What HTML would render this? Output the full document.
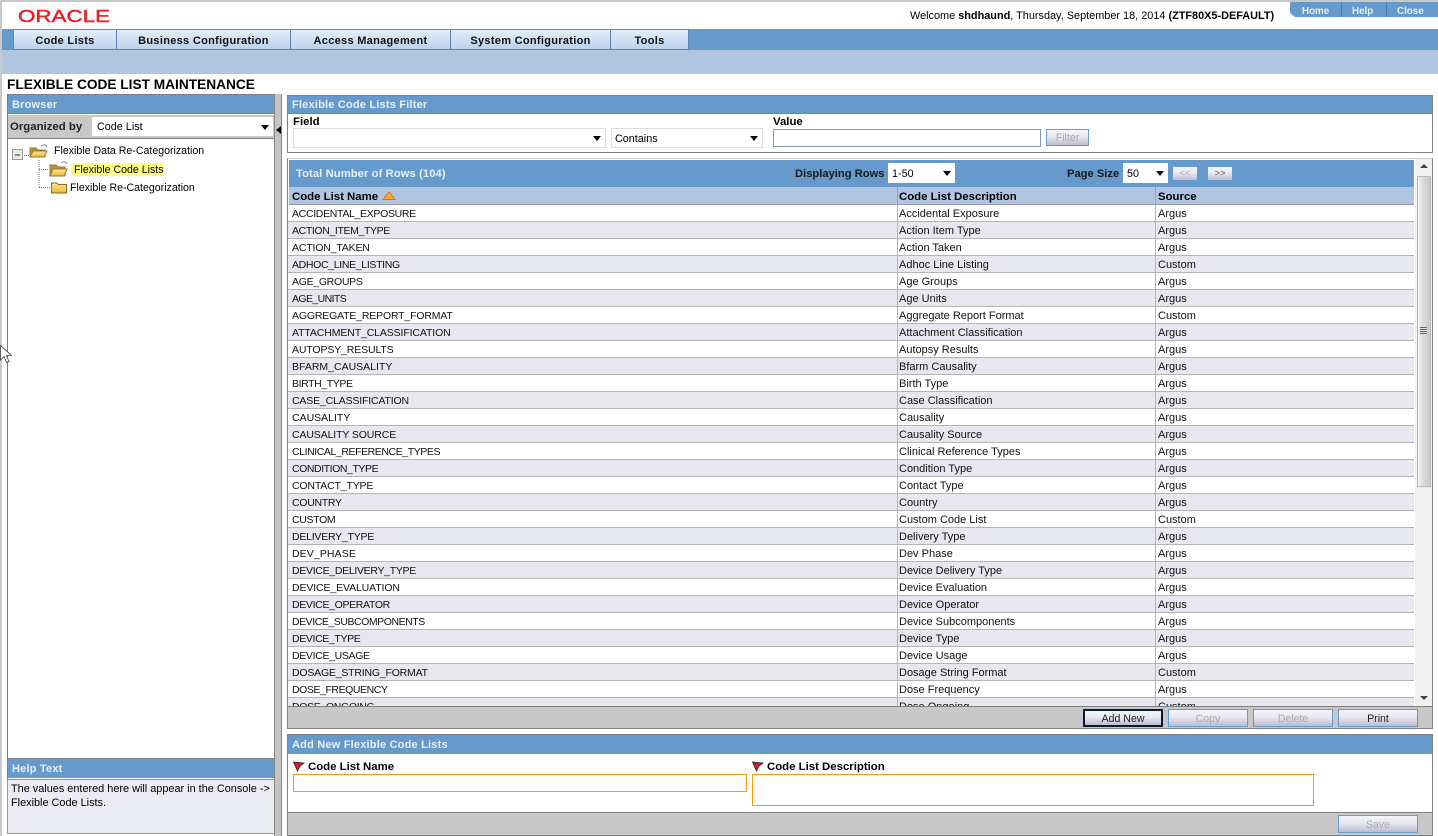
<!DOCTYPE html>
<html><head><meta charset="utf-8"><title>Flexible Code List Maintenance</title>
<style>
html,body{margin:0;padding:0;background:#fff}
body{width:1438px;height:836px;overflow:hidden;position:relative;font-family:"Liberation Sans",Arial,sans-serif;font-size:10.6px;color:#000}
.a{position:absolute;box-sizing:border-box}
.t{position:absolute;white-space:nowrap;line-height:14px}
.b{font-weight:bold}
.ph{position:absolute;box-sizing:border-box;background:#6699cc;color:#e8f0f8;font-weight:bold;font-size:11px;padding-left:4px;letter-spacing:.2px}
.tab{position:absolute;top:29px;height:21px;box-sizing:border-box;border:1px solid #5f86b3;background:linear-gradient(#e4eefa,#b9d2ec);font-weight:bold;font-size:11px;line-height:21px;padding-top:1px;text-align:center;color:#111;letter-spacing:.3px}
.sel{position:absolute;box-sizing:border-box;background:#fff;border:1px solid #ddd;line-height:20px;padding-left:3px;font-size:10.8px}
.sel:after{content:"";position:absolute;right:4px;top:50%;margin-top:-2px;border:4px solid transparent;border-top:5px solid #000;border-bottom:0}
.btn{position:absolute;box-sizing:border-box;width:80px;height:18px;border:1px solid #6699cc;background:linear-gradient(#f4f4fa 0,#e8e8f2 45%,#bcbcd0 100%);text-align:center;font-size:10.6px;line-height:18px;color:#222}
.dis{color:#aaa}
#rows{position:absolute;left:288px;top:205px;width:1126px;height:501px;overflow:hidden}
.r{height:17px;box-sizing:border-box;border-bottom:1px solid #b4b4b4;position:relative;background:#fff;white-space:nowrap}
.r:nth-child(even){background:#e7e7f1}
.r span{position:absolute;top:0;height:17px;box-sizing:border-box;color:#111;line-height:19px;font-size:11px}
.r span:nth-child(1){left:4px;font-size:10.5px}
.r span:nth-child(2){left:609px;width:258px;border-left:1px solid #b4b4b4;padding-left:1px}
.r span:nth-child(3){left:867px;width:259px;border-left:1px solid #b4b4b4;padding-left:2px}
</style></head><body>
<div class="a" style="left:0;top:0;width:1438px;height:2px;background:#c8c8c8"></div>
<div class="a" style="left:0;top:0;width:2px;height:836px;background:#c8c8c8"></div>

<svg class="a" style="left:16px;top:6px" width="98" height="20"><text x="2" y="16" font-family="Liberation Sans" font-size="17.5" fill="#f01c24" stroke="#f01c24" stroke-width=".45" textLength="92" lengthAdjust="spacingAndGlyphs">ORACLE</text></svg>

<div class="t" style="left:910px;top:9px;font-size:10.9px">Welcome <b>shdhaund</b>, Thursday, September 18, 2014 <b>(ZTF80X5-DEFAULT)</b></div>
<div class="a" style="left:1290px;top:2px;width:148px;height:15px;background:#6699cc;clip-path:polygon(0 0,100% 0,100% 100%,5px 100%,0 11px)"></div>
<div class="a" style="left:1341px;top:2px;width:1px;height:15px;background:#4f7cab"></div>
<div class="a" style="left:1386px;top:2px;width:1px;height:15px;background:#4f7cab"></div>
<div class="t b" style="left:1302px;top:5px;color:#e8f0f8;font-size:9.8px">Home</div>
<div class="t b" style="left:1352px;top:5px;color:#e8f0f8;font-size:9.8px">Help</div>
<div class="t b" style="left:1397px;top:5px;color:#e8f0f8;font-size:9.8px">Close</div>

<div class="a" style="left:2px;top:29px;width:1436px;height:21px;background:#6699cc"></div>
<div class="a" style="left:2px;top:50px;width:1436px;height:24px;background:#b1c5e1"></div>
<div class="tab" style="left:13px;width:104px">Code Lists</div>
<div class="tab" style="left:116px;width:175px">Business Configuration</div>
<div class="tab" style="left:290px;width:161px">Access Management</div>
<div class="tab" style="left:450px;width:161px">System Configuration</div>
<div class="tab" style="left:610px;width:79px">Tools</div>

<div class="t b" style="left:7px;top:78px;font-size:13.7px;color:#000">FLEXIBLE CODE LIST MAINTENANCE</div>

<!-- left panel -->
<div class="a" style="left:7px;top:94px;width:268px;height:740px;border:1px solid #808080;background:#fff"></div>
<div class="ph" style="left:8px;top:95px;width:266px;height:19px;border-bottom:1px solid #808080;line-height:20px">Browser</div>
<div class="a" style="left:8px;top:115px;width:266px;height:24px;background:#c8c8c8;border-bottom:1px solid #808080"></div>
<div class="t b" style="left:10px;top:120px;font-size:11.4px;color:#222">Organized by</div>
<div class="sel" style="left:92px;top:117px;width:181px;height:19px;border:0;line-height:20px;padding-left:5px">Code List</div>

<svg class="a" style="left:10px;top:140px" width="190" height="60" fill="none">
<defs><linearGradient id="g" x1="0" y1="0" x2="0" y2="1"><stop offset="0" stop-color="#fbe89a"/><stop offset="1" stop-color="#e8b830"/></linearGradient></defs>
<rect x="2.500" y="9.500" width="10" height="10" fill="#e8e8e8" stroke="#999"/><path d="M5 15h5" stroke="#333"/>
<path d="M14 15.500h6M29 20v28M29 29.500h10M29 47.500h11" stroke="#777" stroke-dasharray="1 1"/>
<path d="M20 17V8h6l2 2h7v7z" fill="#b89440" stroke="#9a7a30"/><path d="M20 17l3-6h14l-3 6z" fill="url(#g)" stroke="#9a7a30"/><path d="M31 6q4-3 6 1" stroke="#6a8fb8"/>
<path d="M40 36V25h6l2 2h7v9z" fill="#b89440" stroke="#9a7a30"/><path d="M40 36l3-7h14l-3 7z" fill="url(#g)" stroke="#9a7a30"/><path d="M51 23q4-3 6 1" stroke="#6a8fb8"/>
<path d="M41.500 53V43h5l2 1.500h8V53z" fill="url(#g)" stroke="#8a6a20"/>
</svg>
<div class="t" style="left:54px;top:144px">Flexible Data Re-Categorization</div>
<div class="a" style="left:71px;top:163px;width:93px;height:13px;background:#ffff80"></div>
<div class="t" style="left:74px;top:163px">Flexible Code Lists</div>
<div class="t" style="left:70px;top:181px">Flexible Re-Categorization</div>

<div class="ph" style="left:8px;top:758px;width:266px;height:20px;border-top:1px solid #808080;line-height:20px">Help Text</div>
<div class="a" style="left:7px;top:779px;width:268px;height:55px;background:#ebebf3;border:1px solid #7f9db9"></div>
<div class="t" style="left:11px;top:782px;font-size:10.9px">The values entered here will appear in the Console -&gt;</div>
<div class="t" style="left:11px;top:796px;font-size:10.9px">Flexible Code Lists.</div>

<!-- splitter -->
<div class="a" style="left:274px;top:94px;width:8px;height:742px;background:#c4c4c4;border-right:1px solid #888;border-left:1px solid #888"></div>
<div class="a" style="left:276px;top:126px;border:4px solid transparent;border-right:5px solid #000;border-left:0"></div>

<!-- filter -->
<div class="a" style="left:287px;top:95px;width:1146px;height:58px;border:1px solid #808080;background:#fff"></div>
<div class="ph" style="left:288px;top:96px;width:1144px;height:18px;border-bottom:1px solid #808080;line-height:19px;padding-left:4px">Flexible Code Lists Filter</div>
<div class="t b" style="left:293px;top:115px;font-size:11.4px">Field</div>
<div class="t b" style="left:773px;top:115px;font-size:11.4px">Value</div>
<div class="sel" style="left:293px;top:128px;width:313px;height:20px"></div>
<div class="sel" style="left:611px;top:128px;width:152px;height:20px">Contains</div>
<div class="a" style="left:773px;top:129px;width:268px;height:18px;border:1px solid #7f9db9;background:#fff"></div>
<div class="btn dis" style="left:1046px;top:129px;width:43px;height:17px;line-height:17px">Filter</div>

<!-- grid -->
<div class="a" style="left:287px;top:158px;width:1146px;height:571px;border:1px solid #808080;border-top-color:#ccc;background:#fff"></div>
<div class="a" style="left:289px;top:160px;width:1125px;height:27px;background:#6699cc"></div>
<div class="t b" style="left:296px;top:167px;color:#e8f0f8;font-size:11.2px;letter-spacing:.1px">Total Number of Rows (104)</div>
<div class="t b" style="left:795px;top:167px;font-size:11.2px;color:#1a1a1a">Displaying Rows</div>
<div class="sel" style="left:888px;top:163px;width:67px;height:20px;border:0;line-height:22px;padding-left:4px">1-50</div>
<div class="t b" style="left:1067px;top:167px;font-size:11.2px;color:#1a1a1a">Page Size</div>
<div class="sel" style="left:1123px;top:163px;width:45px;height:20px;border:0;line-height:22px;padding-left:4px">50</div>
<div class="btn dis" style="left:1173px;top:167px;width:24px;height:13px;line-height:13px;border:0;font-size:9.5px">&lt;&lt;</div>
<div class="btn" style="left:1208px;top:167px;width:24px;height:13px;line-height:13px;border:0;color:#555;font-size:9.5px">&gt;&gt;</div>

<div class="a" style="left:289px;top:187px;width:1125px;height:18px;background:#b1c5e1;border-bottom:1px solid #999"></div>
<div class="t b" style="left:292px;top:190px;font-size:11.4px">Code List Name</div>
<svg class="a" style="left:382px;top:190px" width="14" height="11"><path d="M1 9.500L7 2l6 7.500z" fill="#ffb020" stroke="#e07000"/></svg>
<div class="a" style="left:897px;top:187px;width:1px;height:18px;background:#8fa3bd"></div>
<div class="a" style="left:1155px;top:187px;width:1px;height:18px;background:#8fa3bd"></div>
<div class="t b" style="left:899px;top:190px;font-size:11.4px">Code List Description</div>
<div class="t b" style="left:1158px;top:190px;font-size:11.4px">Source</div>

<div id="rows">
<div class="r"><span style="letter-spacing:-.32px">ACCIDENTAL_EXPOSURE</span><span>Accidental Exposure</span><span>Argus</span></div>
<div class="r"><span style="letter-spacing:-.37px">ACTION_ITEM_TYPE</span><span>Action Item Type</span><span>Argus</span></div>
<div class="r"><span style="letter-spacing:-.17px">ACTION_TAKEN</span><span>Action Taken</span><span>Argus</span></div>
<div class="r"><span style="letter-spacing:-.33px">ADHOC_LINE_LISTING</span><span>Adhoc Line Listing</span><span>Custom</span></div>
<div class="r"><span style="letter-spacing:-.3px">AGE_GROUPS</span><span>Age Groups</span><span>Argus</span></div>
<div class="r"><span style="letter-spacing:-.6px">AGE_UNITS</span><span>Age Units</span><span>Argus</span></div>
<div class="r"><span style="letter-spacing:-.17px">AGGREGATE_REPORT_FORMAT</span><span>Aggregate Report Format</span><span>Custom</span></div>
<div class="r"><span style="letter-spacing:-.12px">ATTACHMENT_CLASSIFICATION</span><span>Attachment Classification</span><span>Argus</span></div>
<div class="r"><span style="letter-spacing:-.13px">AUTOPSY_RESULTS</span><span>Autopsy Results</span><span>Argus</span></div>
<div class="r"><span>BFARM_CAUSALITY</span><span>Bfarm Causality</span><span>Argus</span></div>
<div class="r"><span style="letter-spacing:-.4px">BIRTH_TYPE</span><span>Birth Type</span><span>Argus</span></div>
<div class="r"><span style="letter-spacing:-.16px">CASE_CLASSIFICATION</span><span>Case Classification</span><span>Argus</span></div>
<div class="r"><span>CAUSALITY</span><span>Causality</span><span>Argus</span></div>
<div class="r"><span style="letter-spacing:-.12px">CAUSALITY SOURCE</span><span>Causality Source</span><span>Argus</span></div>
<div class="r"><span style="letter-spacing:-.42px">CLINICAL_REFERENCE_TYPES</span><span>Clinical Reference Types</span><span>Argus</span></div>
<div class="r"><span style="letter-spacing:-.43px">CONDITION_TYPE</span><span>Condition Type</span><span>Argus</span></div>
<div class="r"><span style="letter-spacing:-.17px">CONTACT_TYPE</span><span>Contact Type</span><span>Argus</span></div>
<div class="r"><span style="letter-spacing:-.28px">COUNTRY</span><span>Country</span><span>Argus</span></div>
<div class="r"><span style="letter-spacing:-.33px">CUSTOM</span><span>Custom Code List</span><span>Custom</span></div>
<div class="r"><span style="letter-spacing:-.23px">DELIVERY_TYPE</span><span>Delivery Type</span><span>Argus</span></div>
<div class="r"><span style="letter-spacing:.1px">DEV_PHASE</span><span>Dev Phase</span><span>Argus</span></div>
<div class="r"><span style="letter-spacing:-.3px">DEVICE_DELIVERY_TYPE</span><span>Device Delivery Type</span><span>Argus</span></div>
<div class="r"><span style="letter-spacing:-.12px">DEVICE_EVALUATION</span><span>Device Evaluation</span><span>Argus</span></div>
<div class="r"><span style="letter-spacing:-.33px">DEVICE_OPERATOR</span><span>Device Operator</span><span>Argus</span></div>
<div class="r"><span style="letter-spacing:-.45px">DEVICE_SUBCOMPONENTS</span><span>Device Subcomponents</span><span>Argus</span></div>
<div class="r"><span style="letter-spacing:-.36px">DEVICE_TYPE</span><span>Device Type</span><span>Argus</span></div>
<div class="r"><span style="letter-spacing:-.33px">DEVICE_USAGE</span><span>Device Usage</span><span>Argus</span></div>
<div class="r"><span style="letter-spacing:-.2px">DOSAGE_STRING_FORMAT</span><span>Dosage String Format</span><span>Custom</span></div>
<div class="r"><span style="letter-spacing:-.43px">DOSE_FREQUENCY</span><span>Dose Frequency</span><span>Argus</span></div>
<div class="r"><span style="letter-spacing:-.33px">DOSE_ONGOING</span><span>Dose Ongoing</span><span>Custom</span></div>
</div>

<!-- scrollbar -->
<div class="a" style="left:1415px;top:159px;width:17px;height:548px;background:#f1f1f1"></div>
<div class="a" style="left:1420px;top:164px;border:4px solid transparent;border-bottom:4px solid #444;border-top:0"></div>
<div class="a" style="left:1417px;top:176px;width:14px;height:311px;background:linear-gradient(90deg,#f4f4f4,#dcdcdc 40%,#c8c8c8);border:1px solid #b8b8b8"></div>
<div class="a" style="left:1420px;top:327px;width:7px;height:8px;background:repeating-linear-gradient(#666 0,#666 1px,#ddd 1px,#ddd 2px)"></div>
<div class="a" style="left:1420px;top:696px;border:4px solid transparent;border-top:4px solid #444;border-bottom:0"></div>

<!-- toolbar -->
<div class="a" style="left:288px;top:706px;width:1144px;height:22px;background:#c8c8c8;border-top:1px solid #808080"></div>
<div class="btn" style="left:1083px;top:709px;border:2px solid #0a1a30;line-height:16px">Add New</div>
<div class="btn dis" style="left:1168px;top:709px">Copy</div>
<div class="btn dis" style="left:1253px;top:709px">Delete</div>
<div class="btn" style="left:1338px;top:709px">Print</div>

<!-- add -->
<div class="a" style="left:287px;top:734px;width:1146px;height:102px;border:1px solid #808080;background:#fff"></div>
<div class="ph" style="left:288px;top:735px;width:1144px;height:19px;line-height:20px;padding-left:4px">Add New Flexible Code Lists</div>
<svg class="a" style="left:292px;top:760px" width="13" height="12"><path d="M1.500 2L12 3 8 6 5.500 11z" fill="#d81830" stroke="#222" stroke-width=".8"/></svg>
<svg class="a" style="left:751px;top:760px" width="13" height="12"><path d="M1.500 2L12 3 8 6 5.500 11z" fill="#d81830" stroke="#222" stroke-width=".8"/></svg>
<div class="t b" style="left:308px;top:760px;font-size:11.4px">Code List Name</div>
<div class="t b" style="left:767px;top:760px;font-size:11.4px">Code List Description</div>
<div class="a" style="left:293px;top:774px;width:454px;height:18px;border:1px solid #f39c12;background:#fff"></div>
<div class="a" style="left:752px;top:774px;width:562px;height:32px;border:1px solid #f39c12;background:#fff"></div>
<div class="a" style="left:288px;top:812px;width:1144px;height:23px;background:#c8c8c8;border-top:1px solid #808080"></div>
<div class="btn dis" style="left:1338px;top:815px">Save</div>

<svg class="a" style="left:0;top:345px" width="14" height="20"><path d="M0.500 0.500V15l3.500-3.500 2.500 6 2.500-1-2.500-6h5z" fill="#fff" stroke="#444" stroke-width=".8"/></svg>
</body></html>
